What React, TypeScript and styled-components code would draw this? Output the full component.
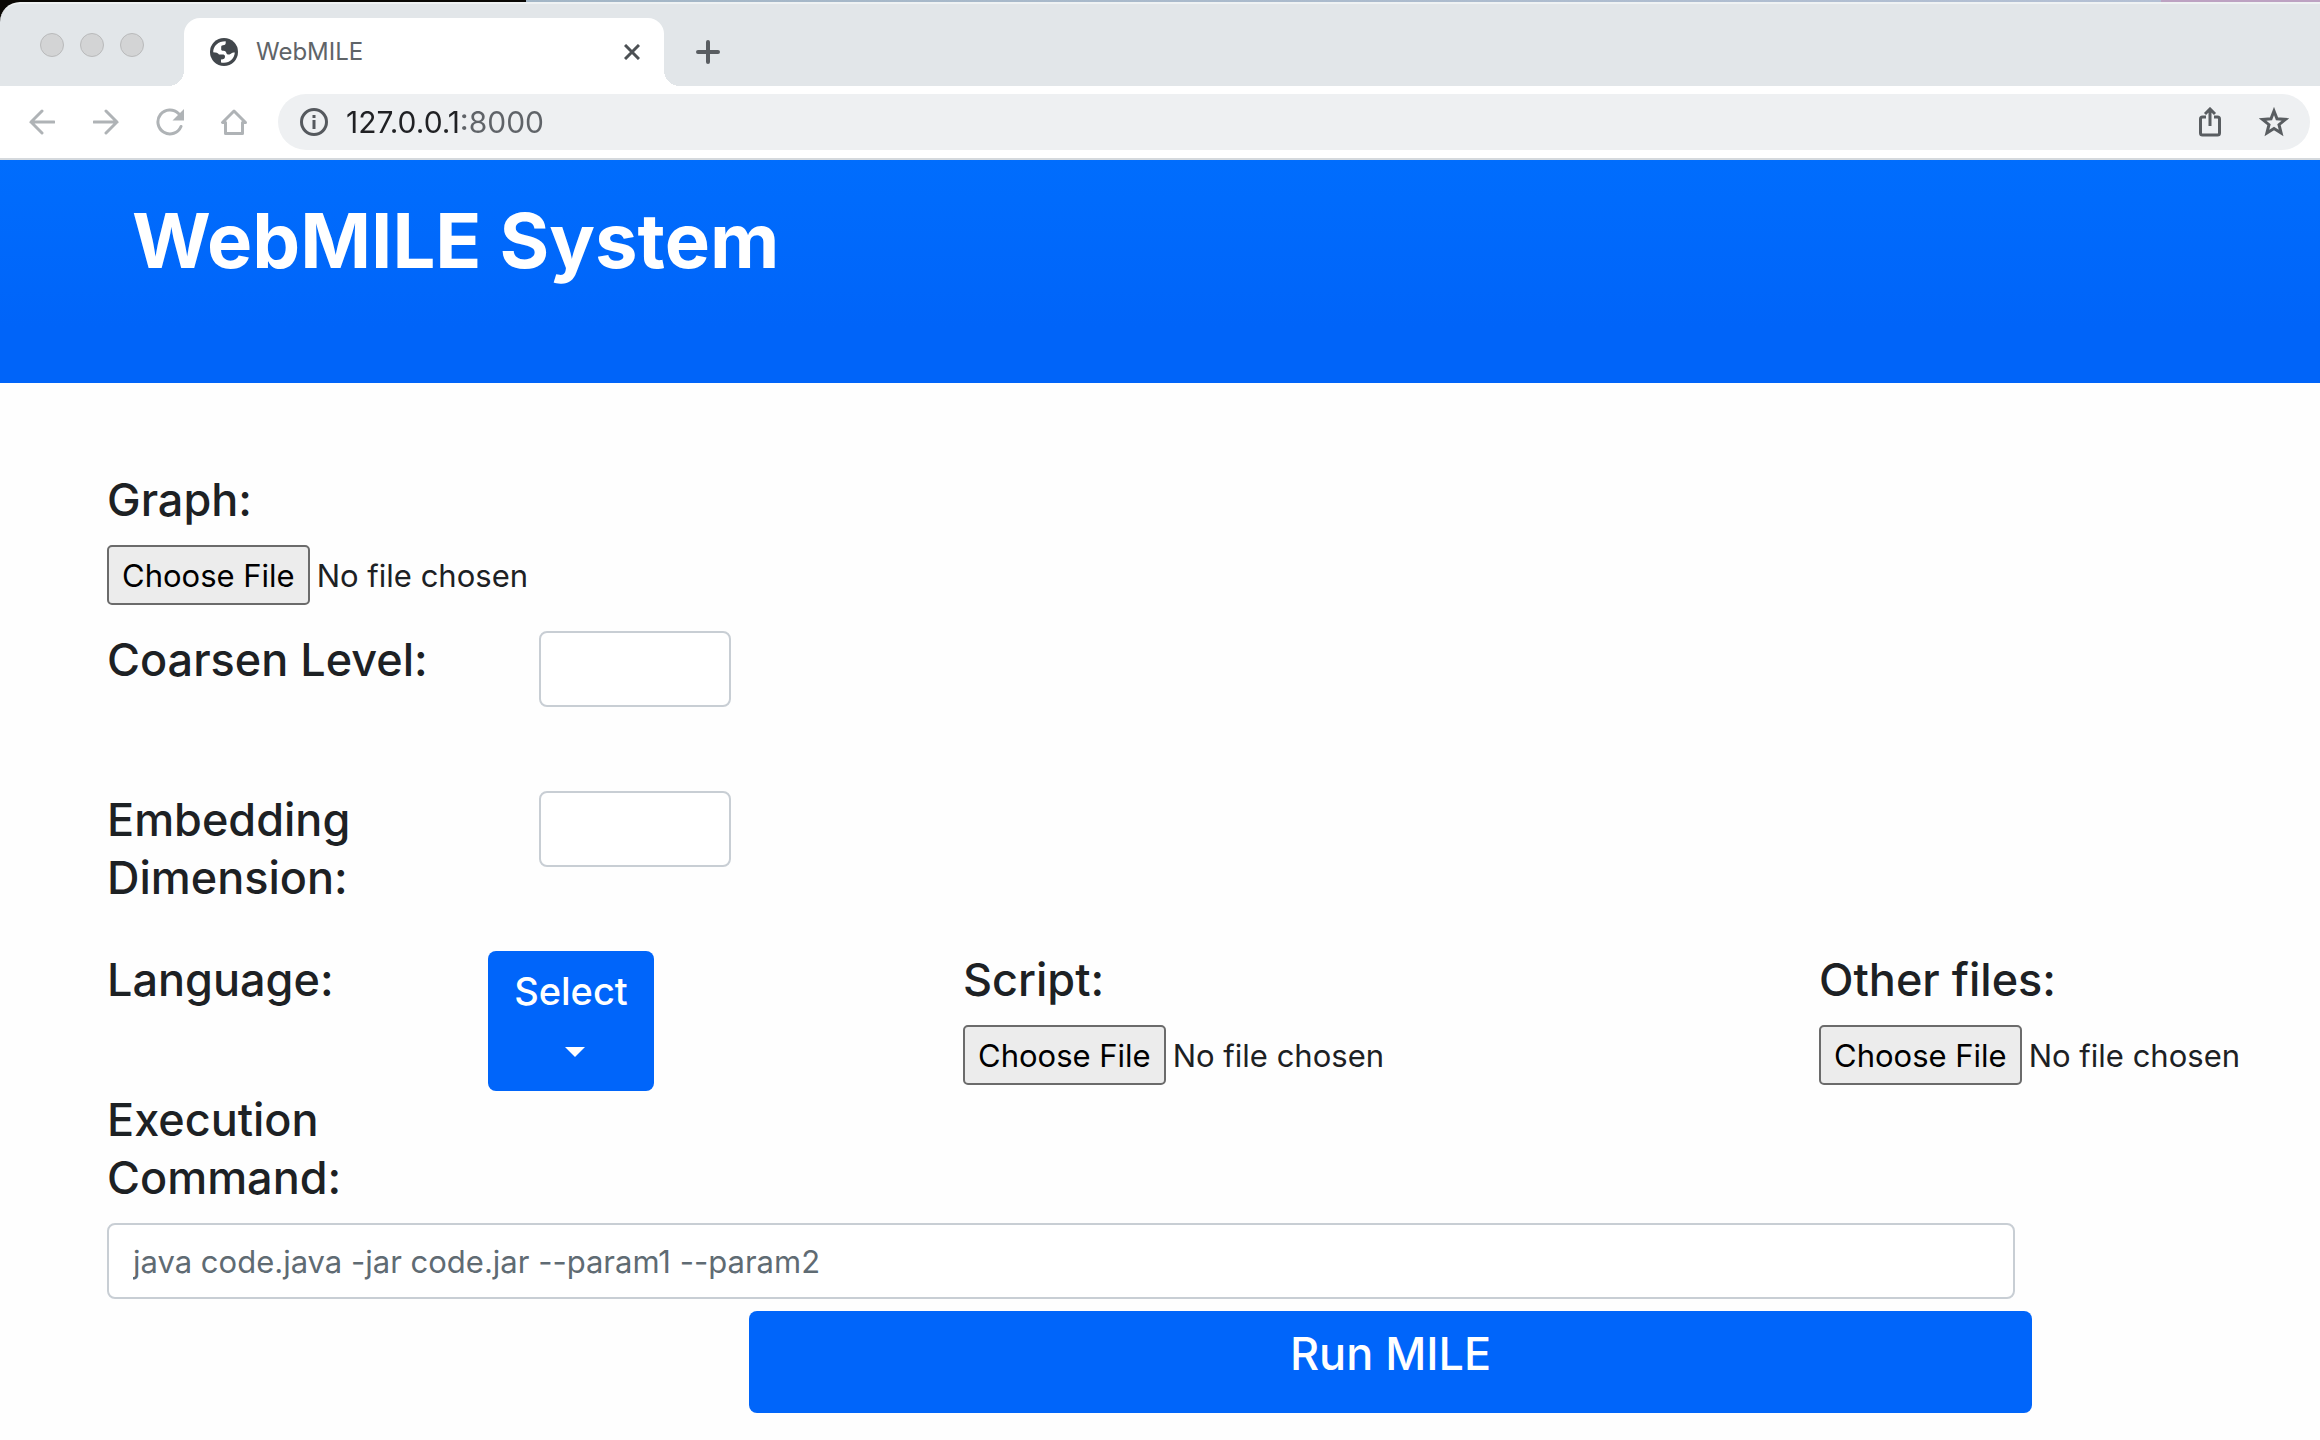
import React, { useId } from "react";
import styled, { createGlobalStyle } from "styled-components";

const GlobalStyle = createGlobalStyle`
  *, *::before, *::after { box-sizing: border-box; }
  html, body { margin: 0; padding: 0; background: #fefefe; }
  body, button, input {
    font-family: Inter, "Liberation Sans", sans-serif;
  }
  body { color: #1d2124; overflow-x: hidden; }
`;

/* ---------- browser window ---------- */

const Desktop = styled.div`
  padding-top: 2px;
  background:
    linear-gradient(90deg, #0a0805 0 526px, #a3b6c6 526px, #b4c0d4 2161px, #bda2c2 2161px)
    no-repeat 0 0 / 100% 2px,
    linear-gradient(#0a0805, #0a0805) no-repeat 0 0 / 40px 40px,
    #fefefe;
`;

const TabStrip = styled.div`
  display: flex;
  align-items: flex-end;
  height: 84px;
  background: #e2e6e9;
  border-top: 2px solid #eff2f3;
  border-top-left-radius: 20px;
`;

const WindowControls = styled.div`
  display: flex;
  gap: 16px;
  align-self: center;
  width: 184px;
  padding-left: 40px;
`;

const WindowControl = styled.button`
  width: 24px;
  height: 24px;
  padding: 0;
  border: 1px solid #b9babb;
  border-radius: 50%;
  background: #d3d4d5;
`;

const Tab = styled.div`
  position: relative;
  display: flex;
  align-items: center;
  width: 480px;
  height: 68px;
  padding: 0 16px 0 26px;
  border-radius: 16px 16px 0 0;
  background: #ffffff;

  &::before,
  &::after {
    content: "";
    position: absolute;
    bottom: 0;
    width: 16px;
    height: 16px;
  }
  &::before {
    right: 100%;
    background: radial-gradient(circle at 0 0, transparent 16px, #ffffff 16px);
  }
  &::after {
    left: 100%;
    background: radial-gradient(circle at 100% 0, transparent 16px, #ffffff 16px);
  }
`;

const TabTitle = styled.span`
  flex: 1;
  margin-left: 18px;
  font-size: 24px;
  line-height: 32px;
  color: #5f6468;
`;

const IconButton = styled.button<{ $color?: string }>`
  display: flex;
  align-items: center;
  justify-content: center;
  width: 32px;
  height: 32px;
  padding: 0;
  border: 0;
  background: none;
  color: ${(p) => p.$color ?? "#595d61"};
`;

const NewTab = styled.div`
  display: flex;
  align-items: center;
  height: 68px;
  padding-left: 28px;
`;

const Toolbar = styled.div`
  display: flex;
  align-items: center;
  height: 74px;
  padding: 0 10px 0 26px;
  background: #ffffff;
  border-bottom: 2px solid #d5d9dd;
`;

const NavButtons = styled.div`
  display: flex;
  gap: 32px;
  width: 252px;
`;

const AddressBar = styled.div`
  display: flex;
  flex: 1;
  align-items: center;
  height: 56px;
  padding: 0 20px;
  border-radius: 28px;
  background: #eef0f2;
`;

const Address = styled.input`
  flex: 1;
  margin-left: 16px;
  padding: 0;
  border: 0;
  outline: 0;
  font-size: 30px;
  line-height: 36px;
  color: #202124;
  background: linear-gradient(90deg, #202124 117px, #5f6368 117px);
  -webkit-background-clip: text;
  background-clip: text;
  -webkit-text-fill-color: transparent;
`;

const AddressActions = styled.div`
  display: flex;
  gap: 32px;
`;

/* ---------- page ---------- */

const Banner = styled.header`
  padding: 32px 132px 95px;
  background: linear-gradient(#006dfd, #0064f9 75%);
`;

const Title = styled.h1`
  margin: 0;
  font-size: 76px;
  font-weight: 700;
  line-height: 96px;
  color: #ffffff;
`;

const Form = styled.form`
  display: flex;
  flex-direction: column;
  padding: 88px 0 27px 107px;
`;

const Row = styled.div<{ $height: number }>`
  display: flex;
  align-items: flex-start;
  min-height: ${(p) => p.$height}px;
`;

const Columns = styled.div`
  display: grid;
  grid-template-columns: 856fr 856fr 501fr;
  min-height: 140px;
`;

const Label = styled.label<{ $width?: number }>`
  display: block;
  width: ${(p) => (p.$width ? `${p.$width}px` : "auto")};
  font-size: 45px;
  font-weight: 500;
  line-height: 58px;
`;

const Field = styled.div`
  display: flex;
  flex-direction: column;
  gap: 16px;
`;

const FileInput = styled.input`
  width: 100%;
  font-size: 31px;
  line-height: 48px;
  color: #1d2124;

  &::file-selector-button {
    height: 60px;
    margin: 0 7px 0 0;
    padding: 0 13px;
    border: 2px solid #6b6b6b;
    border-radius: 5px;
    background: #ececec;
    color: #000000;
    font-family: inherit;
    font-size: 31px;
  }
`;

const TextInput = styled.input<{ $width: string }>`
  width: ${(p) => p.$width};
  height: 76px;
  padding: 0 24px;
  border: 2px solid #c8ced4;
  border-radius: 8px;
  background: #ffffff;
  color: #1d2124;
  font-size: 31px;

  &::placeholder {
    color: #5f6b73;
    opacity: 1;
  }
`;

const PrimaryButton = styled.button`
  border: 0;
  border-radius: 8px;
  background: #0065fa;
  color: #ffffff;
  font-weight: 500;
`;

const SelectButton = styled(PrimaryButton)`
  display: flex;
  flex-direction: column;
  align-items: center;
  width: 166px;
  height: 140px;
  padding: 10px 0 0;
  font-size: 38px;
  line-height: 60px;
`;

const Caret = styled.span`
  margin: 26px 0 0 8px;
  border: 10px solid transparent;
  border-top-color: #ffffff;
  border-bottom: 0;
`;

const RunButton = styled(PrimaryButton)`
  width: 58%;
  height: 102px;
  margin: 12px 0 0 29%;
  padding: 0 0 16px;
  font-size: 45px;
  line-height: 58px;
`;

/* ---------- icons ---------- */

const stroke = { fill: "none", stroke: "currentColor", strokeWidth: 3 } as const;

const Globe = () => (
  <svg width="28" height="28" viewBox="0 0 28 28" aria-hidden="true">
    <circle cx="14" cy="14" r="14" fill="#42474c" />
    <path
      fill="#fff"
      d="M15.700 3.200V5C15.700 6.500 14.500 7.200 13 7.200C11.500 7.200 11.200 8 11.200 9.500V11.500C11.200 12.500 12 12.800 13.500 12.800C15.500 12.800 16 14 16.500 15.200C17 16.500 18 16.800 19.500 16.500C21 16.200 21 14.500 24.800 14.500C24.500 20 20 24.800 14 24.800C12.800 24.800 12 24.700 11 24.400V21.500C14 21.500 15 20.500 15 18.500C15 17 14 16.600 12.500 16.600H9C8 15 6 14.200 3.200 14.200C3.200 8 8 3.200 15.700 3.200Z"
    />
  </svg>
);

const Close = () => (
  <svg width="16" height="16" viewBox="0 0 16 16" aria-hidden="true">
    <path {...stroke} d="M1 1L15 15M15 1L1 15" />
  </svg>
);

const Plus = () => (
  <svg width="24" height="24" viewBox="0 0 24 24" aria-hidden="true">
    <path {...stroke} strokeWidth={4} strokeLinecap="round" d="M12 2V22M2 12H22" />
  </svg>
);

const Back = () => (
  <svg width="26" height="26" viewBox="0 0 26 26" aria-hidden="true">
    <path {...stroke} strokeLinecap="round" d="M13 2L2 13L13 24M2 13H25" />
  </svg>
);

const Forward = () => (
  <svg width="26" height="26" viewBox="0 0 26 26" aria-hidden="true">
    <path {...stroke} strokeLinecap="round" d="M13 2L24 13L13 24M24 13H1" />
  </svg>
);

const Reload = () => (
  <svg width="28" height="28" viewBox="0 0 28 28" aria-hidden="true">
    <path {...stroke} strokeLinecap="round" d="M25 18.500A12 12 0 1 1 22.500 5.500" />
    <path fill="currentColor" d="M28 1V12.500H16.500Z" />
  </svg>
);

const Home = () => (
  <svg width="28" height="28" viewBox="0 0 28 28" aria-hidden="true">
    <path {...stroke} strokeLinejoin="round" d="M14 3L2.500 14.500H5.500V25.500H22.500V14.500H25.500Z" />
  </svg>
);

const Info = () => (
  <svg width="28" height="28" viewBox="0 0 28 28" aria-hidden="true">
    <circle {...stroke} cx="14" cy="14" r="12.500" color="#55595e" />
    <path fill="#55595e" d="M12.500 7H15.500V10H12.500ZM12.500 12H15.500V21H12.500Z" />
  </svg>
);

const Share = () => (
  <svg width="24" height="30" viewBox="0 0 24 30" aria-hidden="true">
    <path {...stroke} d="M8 10H4.500Q2.500 10 2.500 12V26Q2.500 28 4.500 28H19.500Q21.500 28 21.500 26V12Q21.500 10 19.500 10H16M12 19V3M7 7L12 2L17 7" />
  </svg>
);

const Star = () => (
  <svg width="30" height="30" viewBox="0 0 30 30" aria-hidden="true">
    <path {...stroke} d="M15 4L18 11.800L26.500 12.400L20 17.700L22.100 26L15 21.500L7.900 26L10 17.700L3.500 12.400L12 11.800Z" />
  </svg>
);

/* ---------- parts ---------- */

function FileField({ label }: { label: string }) {
  const id = useId();
  return (
    <Field>
      <Label htmlFor={id}>{label}</Label>
      <FileInput id={id} type="file" />
    </Field>
  );
}

function ShortField({ label }: { label: string }) {
  const id = useId();
  return (
    <Row $height={160}>
      <Label htmlFor={id} $width={432}>
        {label.split("\n").map((line) => (
          <div key={line}>{line}</div>
        ))}
      </Label>
      <TextInput id={id} type="text" $width="192px" />
    </Row>
  );
}

export default function App() {
  return (
    <>
      <GlobalStyle />
      <Desktop>
        <TabStrip>
          <WindowControls>
            <WindowControl aria-label="Close window" />
            <WindowControl aria-label="Minimize window" />
            <WindowControl aria-label="Zoom window" />
          </WindowControls>
          <Tab>
            <Globe />
            <TabTitle>WebMILE</TabTitle>
            <IconButton aria-label="Close tab" $color="#4c5054"><Close /></IconButton>
          </Tab>
          <NewTab>
            <IconButton aria-label="New tab"><Plus /></IconButton>
          </NewTab>
        </TabStrip>
        <Toolbar>
          <NavButtons>
            <IconButton aria-label="Back" $color="#afb3b6"><Back /></IconButton>
            <IconButton aria-label="Forward" $color="#afb3b6"><Forward /></IconButton>
            <IconButton aria-label="Reload" $color="#afb3b6"><Reload /></IconButton>
            <IconButton aria-label="Home" $color="#afb3b6"><Home /></IconButton>
          </NavButtons>
          <AddressBar>
            <IconButton aria-label="Site information"><Info /></IconButton>
            <Address aria-label="Address" defaultValue="127.0.0.1:8000" spellCheck={false} />
            <AddressActions>
              <IconButton aria-label="Share"><Share /></IconButton>
              <IconButton aria-label="Bookmark"><Star /></IconButton>
            </AddressActions>
          </AddressBar>
        </Toolbar>
      </Desktop>
      <Banner>
        <Title>WebMILE System</Title>
      </Banner>
      <Form onSubmit={(e) => e.preventDefault()}>
        <Row $height={160}>
          <FileField label="Graph:" />
        </Row>
        <ShortField label="Coarsen Level:" />
        <ShortField label={"Embedding\nDimension:"} />
        <Columns>
          <Row $height={140}>
            <Label htmlFor="language" $width={381}>Language:</Label>
            <SelectButton id="language" type="button" aria-haspopup="listbox">
              Select
              <Caret />
            </SelectButton>
          </Row>
          <FileField label="Script:" />
          <FileField label="Other files:" />
        </Columns>
        <Field>
          <Label htmlFor="command" $width={380}>Execution Command:</Label>
          <TextInput
            id="command"
            type="text"
            $width="86.2%"
            placeholder="java code.java -jar code.jar --param1 --param2"
          />
        </Field>
        <RunButton type="submit">Run MILE</RunButton>
      </Form>
    </>
  );
}
